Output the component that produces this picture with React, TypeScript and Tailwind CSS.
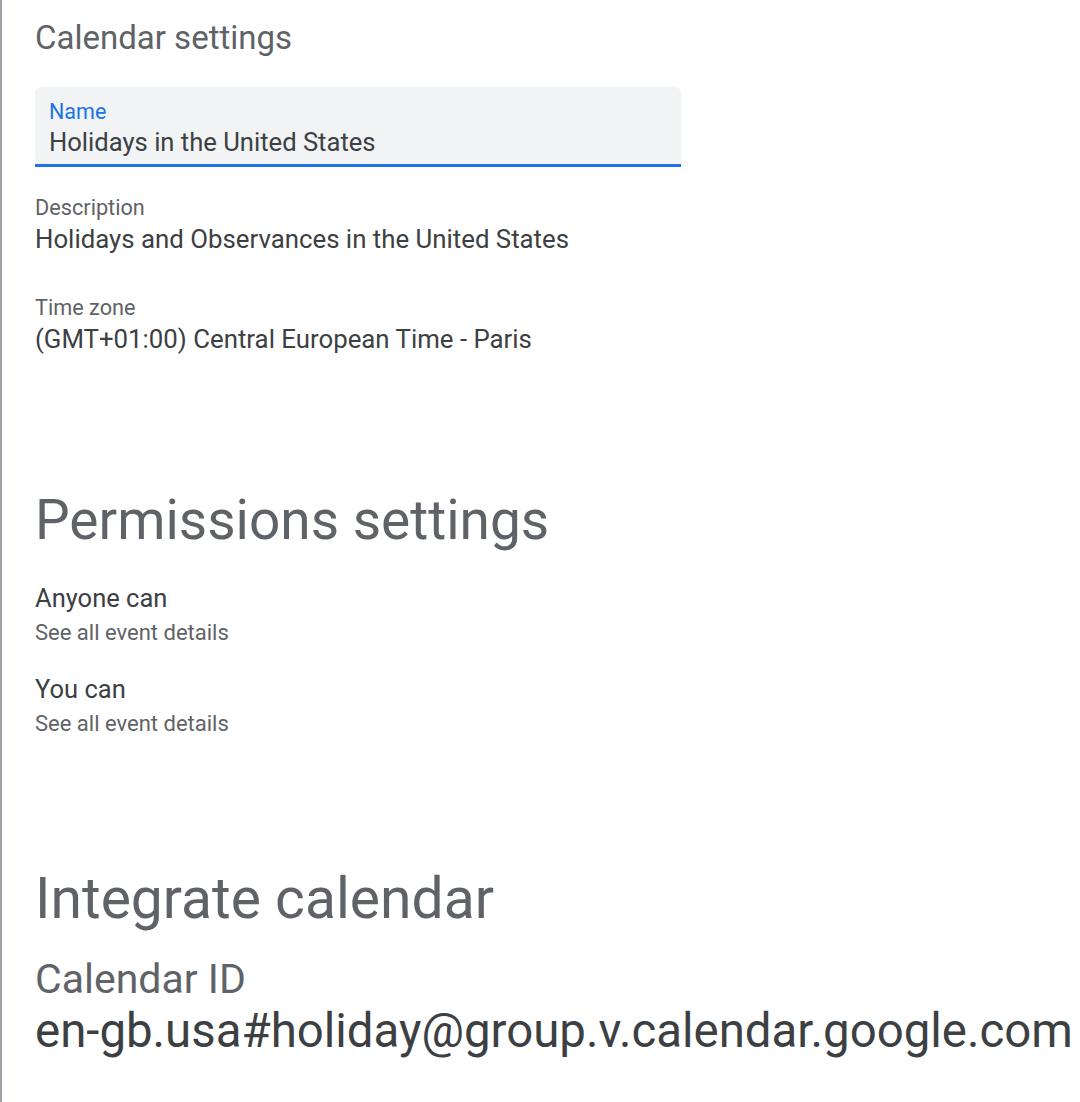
import React from 'react'

const font = { fontFamily: 'Roboto, "Noto Sans", sans-serif' }

function Field({ label, value, className = '' }: { label: string; value: string; className?: string }) {
  return (
    <div className={`flex flex-col ${className}`}>
      <span className="text-[21.7px] leading-[26px] text-[#5f6368]">{label}</span>
      <span className="mt-[3px] text-[25.8px] leading-[30px] text-[#3c4043]">{value}</span>
    </div>
  )
}

function Permission({ who, what, className = '' }: { who: string; what: string; className?: string }) {
  return (
    <div className={`flex flex-col ${className}`}>
      <span className="text-[25.5px] leading-[30px] text-[#3c4043]">{who}</span>
      <span className="mt-[5px] text-[22px] leading-[30px] text-[#5f6368]">{what}</span>
    </div>
  )
}

export default function App() {
  return (
    <div style={font} className="min-h-[1102px] w-[1080px] overflow-hidden border-l-2 border-[#9aa0a6] bg-white pl-[33px]">
      {/* Calendar settings */}
      <h2 className="pt-[18px] text-[33px] leading-[40px] text-[#5f6368]">Calendar settings</h2>

      <div className="mt-[29px] w-[646px] rounded-t-[6px] border-b-[3px] border-[#1a73e8] bg-[#f1f3f4] px-[14px] pt-[12px] pb-[7px]">
        <div className="text-[21.5px] leading-[26px] text-[#1a73e8]">Name</div>
        <div className="mt-[2px] text-[25.6px] leading-[30px] text-[#3c4043]">Holidays in the United States</div>
      </div>

      <Field className="mt-[28px]" label="Description" value="Holidays and Observances in the United States" />
      <Field className="mt-[41px]" label="Time zone" value="(GMT+01:00) Central European Time - Paris" />

      {/* Permissions settings */}
      <h2 className="mt-[134px] text-[55px] leading-[64px] text-[#5f6368]">Permissions settings</h2>
      <Permission className="mt-[31px]" who="Anyone can" what="See all event details" />
      <Permission className="mt-[26px]" who="You can" what="See all event details" />

      {/* Integrate calendar */}
      <h2 className="mt-[128px] text-[57px] leading-[64px] text-[#5f6368]">Integrate calendar</h2>
      <div className="mt-[24px] text-[41px] leading-[48px] text-[#5f6368]">Calendar ID</div>
      <div className="text-[47.4px] leading-[56px] text-[#3c4043]">en-gb.usa#holiday@group.v.calendar.google.com</div>
    </div>
  )
}
